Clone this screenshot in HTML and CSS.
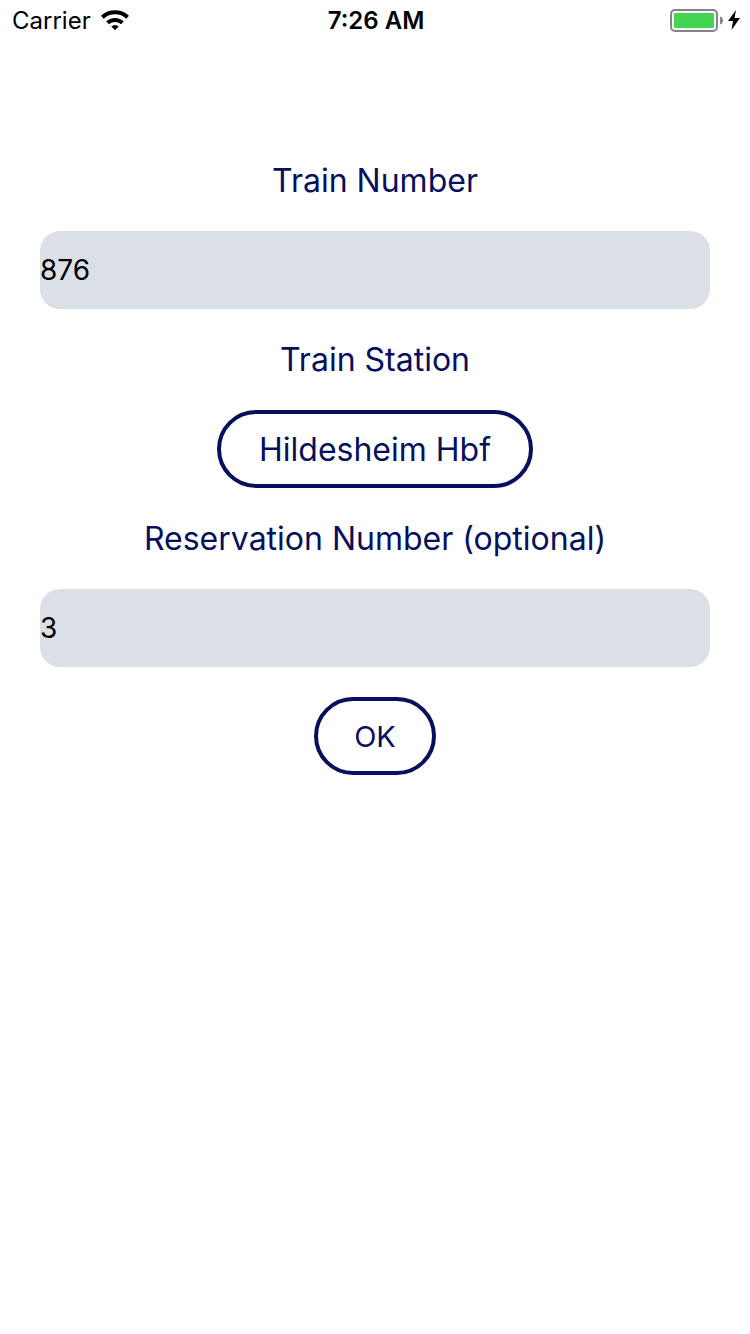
FILE: index.html
```html
<!DOCTYPE html>
<html lang="en">
<head>
<meta charset="utf-8">
<meta name="viewport" content="width=device-width, initial-scale=1">
<title>Train</title>
<link rel="stylesheet" href="styles.css">
</head>
<body>
<header class="status">
  <div class="status-left">
    <span>Carrier</span>
    <svg class="wifi" viewBox="0 0 28 20" aria-hidden="true">
      <path d="M14 20.200 10.300 16.600Q14 13.200 17.700 16.600Z"/>
      <path class="arc" d="M6.600 12.900a10.600 10.600 0 0 1 14.800 0M1.400 7.200a18.500 18.500 0 0 1 25.200 0"/>
    </svg>
  </div>
  <span class="time">7:26 AM</span>
  <div class="status-right">
    <svg class="battery" viewBox="0 0 54 24" aria-hidden="true">
      <rect class="shell" x="1" y="2" width="46" height="21" rx="4"/>
      <rect class="charge" x="4" y="5" width="40" height="15" rx="1"/>
      <path class="cap" d="M50 8.500c4 1 4 7 0 8Z"/>
    </svg>
    <svg class="bolt" viewBox="0 0 12 20" aria-hidden="true"><path d="M8 0 0 11h5L3.500 20 12 8H6.500Z"/></svg>
  </div>
</header>
<main>
  <form class="form">
    <label class="label" for="train">Train Number</label>
    <input class="field" id="train" type="text" value="876">
    <label class="label" for="station">Train Station</label>
    <button class="pill station" id="station" type="button">Hildesheim Hbf</button>
    <label class="label" for="reservation">Reservation Number (optional)</label>
    <input class="field" id="reservation" type="text" value="3">
    <button class="pill ok" type="button">OK</button>
  </form>
</main>
</body>
</html>
```
FILE: styles.css
```css
* { box-sizing: border-box; }
body {
  margin: 0;
  background: #fff;
  color: #000;
  font-family: Inter, "Liberation Sans", sans-serif;
}
.status {
  display: grid;
  grid-template-columns: 1fr auto 1fr;
  align-items: center;
  height: 40px;
  padding: 0 10px 0 12px;
  font-size: 24px;
}
.status-left, .status-right { display: flex; align-items: center; }
.status-left { gap: 10px; }
.status-right { justify-content: flex-end; gap: 4px; }
.time { font-weight: 600; }
.wifi { width: 28px; height: 20px; }
.arc { fill: none; stroke: #000; stroke-width: 4; }
.battery { width: 54px; height: 24px; }
.shell { fill: none; stroke: #858589; stroke-width: 2; }
.charge { fill: #43d551; }
.cap { fill: #858589; }
.bolt { width: 12px; height: 20px; }
.form {
  display: flex;
  flex-direction: column;
  align-items: center;
  padding: 120px 40px 40px;
}
.label {
  color: #06105c;
  font-size: 32px;
  line-height: 41px;
  margin-bottom: 30px;
  text-align: center;
}
.field {
  width: 100%;
  height: 78px;
  margin: 0 0 30px;
  padding: 0;
  border: 0;
  border-radius: 20px;
  background: #dbdfe6;
  color: #000;
  font: inherit;
  font-size: 28px;
}
.pill {
  height: 78px;
  margin: 0 0 30px;
  border: 4px solid #06105c;
  border-radius: 40px;
  background: #fff;
  color: #06105c;
  font: inherit;
}
.station {
  padding: 0 38px;
  font-size: 32px;
}
.ok {
  padding: 0 36px;
  font-size: 29px;
}
```
